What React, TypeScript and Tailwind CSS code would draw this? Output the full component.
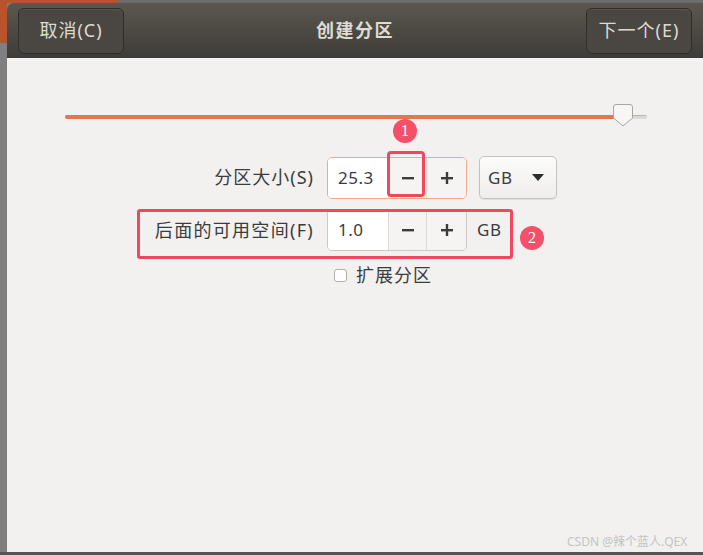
import React from 'react'

const font = { fontFamily: '"Noto Sans", "Noto Sans CJK SC", sans-serif' }

const MinusIcon = () => (
  <svg width="14" height="14" viewBox="0 0 14 14">
    <rect x="1" y="6" width="12" height="2.4" fill="#3c3c3c" />
  </svg>
)

const PlusIcon = () => (
  <svg width="14" height="14" viewBox="0 0 14 14">
    <rect x="1" y="6" width="12" height="2.4" fill="#3c3c3c" />
    <rect x="5.8" y="1" width="2.4" height="12" fill="#3c3c3c" />
  </svg>
)

const SpinEntry = ({ value, focused }: { value: string; focused?: boolean }) => (
  <div
    className={`flex h-[42px] w-[140px] overflow-hidden rounded-[5px] border ${
      focused ? 'border-[#eeab8c]' : 'border-[#cdc8c3]'
    }`}
  >
    <div className="flex w-[60px] items-center bg-white pl-[10px] text-[17px] tracking-[0.5px] text-[#3c3c3c]">{value}</div>
    <div className="flex w-[38px] items-center justify-center border-l border-[#dcd8d4] bg-[#f5f4f3]">
      <MinusIcon />
    </div>
    <div className="flex flex-1 items-center justify-center border-l border-[#dcd8d4] bg-[#f5f4f3]">
      <PlusIcon />
    </div>
  </div>
)

const Badge = ({ n, className }: { n: string; className: string }) => (
  <div
    className={`absolute flex h-[24px] w-[24px] items-center justify-center rounded-full bg-[#f4506a] text-[16px] text-white ${className}`}
    style={{ fontFamily: '"Liberation Serif", serif' }}
  >
    {n}
  </div>
)

export default function App() {
  return (
    <div className="relative flex h-[555px] w-[703px] flex-col overflow-hidden bg-[#7d7d7d]" style={font}>
      {/* desktop strip on top */}
      <div className="flex h-[3px] shrink-0">
        <div className="w-[117px] bg-[#b9532c]" />
        <div className="flex-1 bg-[#6e6c69]" />
      </div>

      <div className="flex flex-1">
        {/* desktop strip on the left */}
        <div className="flex w-[7px] shrink-0 flex-col">
          <div className="h-[40px] bg-[#b9532c]" />
          <div className="flex-1 bg-[#7f7f7f]" />
        </div>

        {/* dialog */}
        <div className="flex flex-1 flex-col overflow-hidden rounded-tl-[7px]">
          <div className="flex h-[55px] shrink-0 items-center justify-between bg-gradient-to-b from-[#5b5750] to-[#3e3c38] px-[11px]">
            <button className="flex h-[46px] w-[106px] items-center justify-center rounded-[6px] border border-[#2f2d2a] bg-[#4a4742] text-[18px] tracking-[1px] text-[#dfdbd2] shadow-[inset_0_1px_0_rgba(255,255,255,0.08)]">
              取消(C)
            </button>
            <div className="text-[18px] font-bold tracking-[1.5px] text-[#dfdbd2]">创建分区</div>
            <button className="flex h-[46px] w-[106px] items-center justify-center rounded-[6px] border border-[#2f2d2a] bg-[#4a4742] text-[18px] tracking-[1px] text-[#dfdbd2] shadow-[inset_0_1px_0_rgba(255,255,255,0.08)]">
              下一个(E)
            </button>
          </div>

          <div className="flex flex-1 flex-col bg-[#f2f1f0]">
            {/* slider */}
            <div className="relative mt-[57px] ml-[58px] mr-[56px] h-[4px]">
              <div className="flex h-[4px] overflow-hidden rounded-full">
                <div className="w-[556px] border-t border-[#b8876f] bg-[#e6764c]" />
                <div className="flex-1 border-t border-[#b9b6b2] bg-[#dcd9d6]" />
              </div>
              <svg className="absolute left-[548px] top-[-11px]" width="20" height="23" viewBox="0 0 20 23">
                <path
                  d="M3 0.5 H17 Q19.5 0.5 19.5 3 V14 L10 22 L0.5 14 V3 Q0.5 0.5 3 0.5 Z"
                  fill="#f7f6f5"
                  stroke="#a9a59f"
                />
              </svg>
            </div>

            {/* form */}
            <div className="mt-[37px] flex flex-col gap-[10px]">
              <div className="flex items-center">
                <div className="w-[310px] pr-[3px] text-right text-[18px] tracking-[1px] text-[#3c3c3c]">分区大小(S)</div>
                <div className="ml-[10px]">
                  <SpinEntry value="25.3" focused />
                </div>
                <div className="ml-[12px] flex h-[43px] w-[78px] items-center justify-between rounded-[5px] border border-[#c6c1bc] bg-gradient-to-b from-[#fbfbfa] to-[#efeeed] pl-[8px] pr-[12px] shadow-[0_1px_1px_rgba(0,0,0,0.08)]">
                  <span className="text-[17px] tracking-[0.5px] text-[#3c3c3c]">GB</span>
                  <svg width="12" height="7" viewBox="0 0 12 7">
                    <path d="M0 0 H12 L6 7 Z" fill="#2e2e2e" />
                  </svg>
                </div>
              </div>

              <div className="flex items-center">
                <div className="w-[310px] pr-[3px] text-right text-[18px] tracking-[1.3px] text-[#3c3c3c]">后面的可用空间(F)</div>
                <div className="ml-[10px]">
                  <SpinEntry value="1.0" />
                </div>
                <span className="ml-[10px] text-[17px] tracking-[0.5px] text-[#3c3c3c]">GB</span>
              </div>

              <div className="ml-[327px] mt-[1px] flex items-center gap-[9px]">
                <div className="h-[13px] w-[13px] rounded-[3px] border border-[#b3afab] bg-white" />
                <span className="text-[18px] tracking-[1px] text-[#3c3c3c]">扩展分区</span>
              </div>
            </div>
          </div>
        </div>
      </div>

      <div className="h-[3px] shrink-0 bg-[#555452]" />

      {/* annotations */}
      <div className="absolute left-[387px] top-[151px] h-[46px] w-[38px] rounded-[4px] border-[3px] border-[#f2475d]" />
      <div className="absolute left-[137px] top-[209px] h-[50px] w-[376px] rounded-[3px] border-[3px] border-[#f2475d]" />
      <Badge n="1" className="left-[393px] top-[119px]" />
      <Badge n="2" className="left-[520px] top-[226px]" />

      <div className="absolute left-[567px] top-[533px] text-[12px] text-[#c4c4c4]">CSDN @辣个蓝人.QEX</div>
    </div>
  )
}
